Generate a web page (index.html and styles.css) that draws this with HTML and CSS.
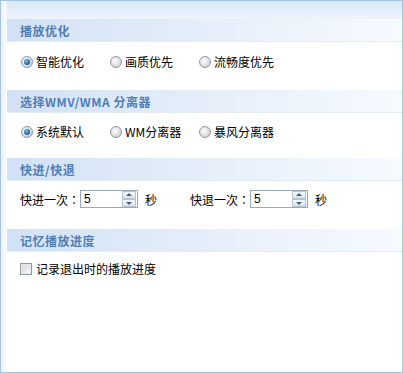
FILE: index.html
```html
<!DOCTYPE html>
<html>
<head>
<meta charset="utf-8">
<link rel="stylesheet" href="styles.css">
</head>
<body>
<div class="panel">
  <div class="section s1">
    <div class="head">播放优化</div>
    <div class="body">
      <div class="row">
        <label class="opt w1"><span class="radio on"></span><span>智能优化</span></label>
        <label class="opt w2"><span class="radio"></span><span>画质优先</span></label>
        <label class="opt"><span class="radio"></span><span>流畅度优先</span></label>
      </div>
    </div>
  </div>
  <div class="section s2">
    <div class="head">选择WMV/WMA 分离器</div>
    <div class="body">
      <div class="row">
        <label class="opt w1"><span class="radio on"></span><span>系统默认</span></label>
        <label class="opt w2"><span class="radio"></span><span>WM分离器</span></label>
        <label class="opt"><span class="radio"></span><span>暴风分离器</span></label>
      </div>
    </div>
  </div>
  <div class="section s3">
    <div class="head">快进/快退</div>
    <div class="body">
      <div class="row spinrow">
        <span class="lbl">快进一次<span class="colon">：</span></span>
        <span class="spin"><span class="val">5</span><span class="btns"><span class="btn up"></span><span class="btn down"></span></span></span>
        <span class="unit">秒</span>
        <span class="lbl second">快退一次<span class="colon">：</span></span>
        <span class="spin"><span class="val">5</span><span class="btns"><span class="btn up"></span><span class="btn down"></span></span></span>
        <span class="unit">秒</span>
      </div>
    </div>
  </div>
  <div class="section s4">
    <div class="head">记忆播放进度</div>
    <div class="body">
      <div class="row chkrow">
        <label class="opt"><span class="check"></span><span>记录退出时的播放进度</span></label>
      </div>
    </div>
  </div>
</div>
</body>
</html>
```
FILE: styles.css
```css
* { box-sizing: border-box; }
html, body { margin: 0; padding: 0; }
body {
  font-family: "Noto Sans CJK SC", "Noto Sans", sans-serif;
  font-size: 12px;
  color: #000;
  background: #fff;
}
.panel {
  width: 403px;
  height: 373px;
  border: 1px solid #a6c3e2;
  padding-top: 18px;
  background:
    linear-gradient(to right, #edf3fa 0, #f7fafd 5px, rgba(255,255,255,0) 6px),
    linear-gradient(to bottom, #dce8f7 0, #eef4fb 18px, #ffffff 44px);
  overflow: hidden;
}
.head {
  height: 23px;
  margin-left: 6px;
  padding-left: 13px;
  display: flex;
  align-items: center;
  font-weight: bold;
  color: #4f7fb6;
  font-size: 12px;
  letter-spacing: 0.5px;
  background: linear-gradient(to right, #d1e1f5 0%, #e3edf9 45%, #f7faff 100%);
  border-bottom: 1px solid #e4edf8;
}
.body { padding-left: 19px; }
.s1 .body { padding-top: 10px; padding-bottom: 18px; }
.s2 .body { padding-top: 9px; padding-bottom: 16px; }
.s3 .body { padding-top: 9px; padding-bottom: 21px; }
.s4 .body { padding-top: 7px; }
.row {
  height: 20px;
  display: flex;
  align-items: center;
}
.opt {
  display: flex;
  align-items: center;
  gap: 3px;
  line-height: 20px;
}
.w1 { width: 90px; padding-left: 1px; }
.w2 { width: 89px; }
.radio {
  width: 12px;
  height: 12px;
  border-radius: 50%;
  border: 1px solid #8b9cad;
  background: radial-gradient(circle at 40% 40%, #ffffff 0, #e4e4e4 45%, #c4c4c4 100%);
  position: relative;
}
.radio.on::after {
  content: "";
  position: absolute;
  left: 2px;
  top: 2px;
  width: 6px;
  height: 6px;
  border-radius: 50%;
  background: radial-gradient(circle at 40% 35%, #8fc1ea 0, #2d6aa6 55%, #123e6c 100%);
}
.radio.on {
  background: radial-gradient(circle at 40% 40%, #ffffff 0, #d9e4ee 50%, #a9b9c8 100%);
}
.spinrow { height: 18px; }
.lbl { width: 60px; white-space: nowrap; }
.colon { font-family: "Noto Sans CJK TC", "Noto Sans CJK SC", sans-serif; }
.lbl.second { margin-left: 33px; }
.spin {
  width: 58px;
  height: 18px;
  border: 1px solid #9aa9ba;
  background: #fff;
  display: flex;
}
.val {
  flex: 1;
  padding-left: 3px;
  line-height: 16px;
  font-family: "Liberation Sans", Arial, sans-serif;
  font-size: 12px;
}
.btns {
  width: 15px;
  display: flex;
  flex-direction: column;
  padding: 0 1px 0 0;
}
.btn {
  flex: 1;
  border: 1px solid #b7c4d2;
  background: linear-gradient(to bottom, #f6f8fb, #dbe2ea);
  position: relative;
}
.btn::after {
  content: "";
  position: absolute;
  left: 50%;
  top: 50%;
  margin-left: -3px;
  border-left: 3px solid transparent;
  border-right: 3px solid transparent;
}
.btn.up::after { margin-top: -2px; border-bottom: 3px solid #4d6075; }
.btn.down::after { margin-top: -1px; border-top: 3px solid #4d6075; }
.unit { margin-left: 7px; }
.chkrow .opt { gap: 4px; }
.check {
  width: 12px;
  height: 12px;
  border: 1px solid #8e9aa6;
  background: linear-gradient(135deg, #d2d2d2 0, #ececec 60%, #f8f8f8 100%);
  box-shadow: inset 0 0 0 1px #e9e9e9;
}
```
